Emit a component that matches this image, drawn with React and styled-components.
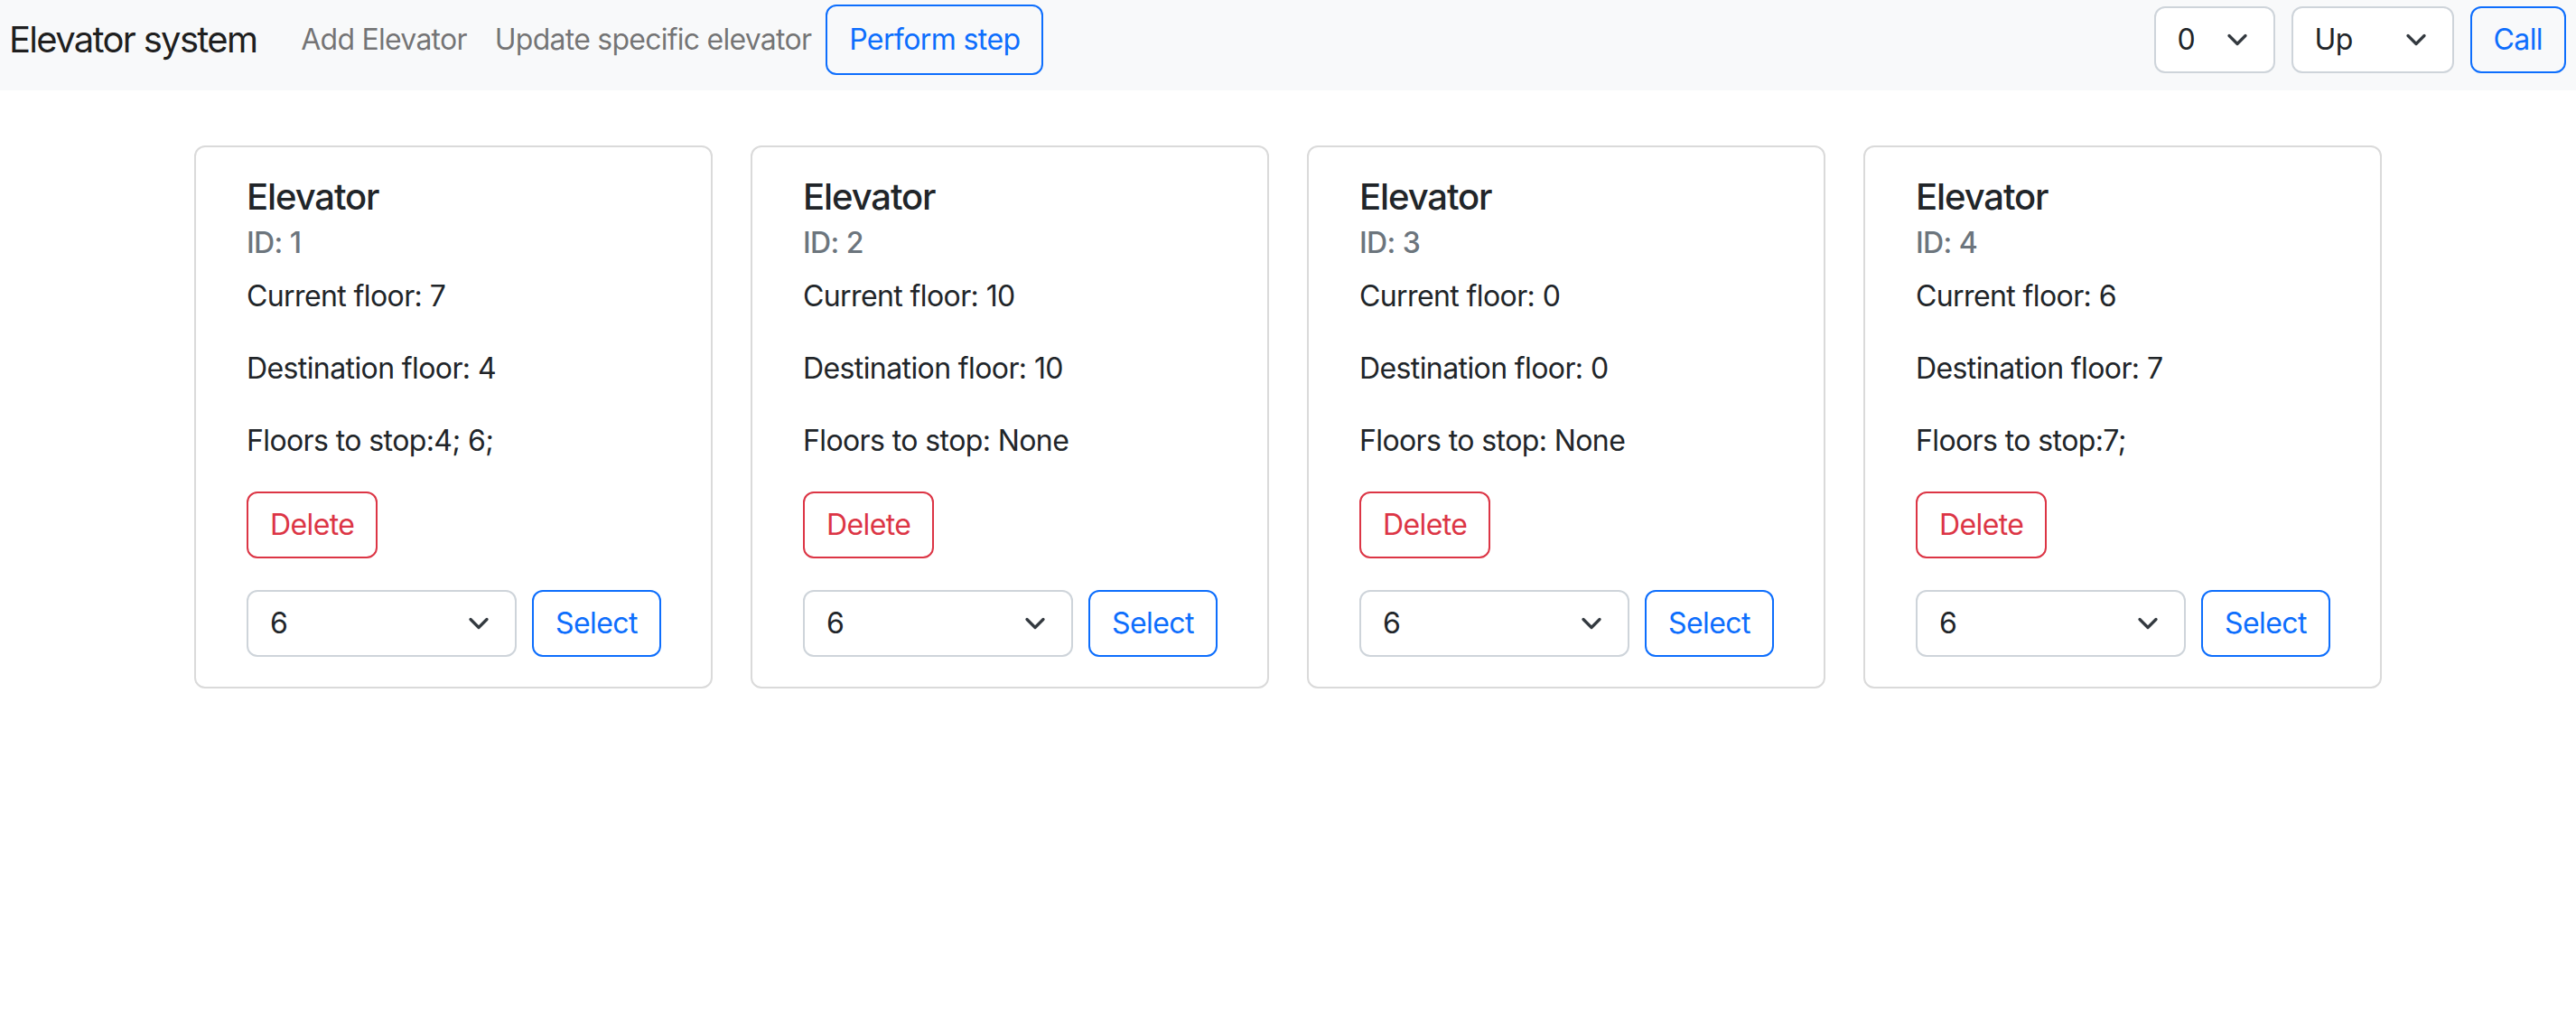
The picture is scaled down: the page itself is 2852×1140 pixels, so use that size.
import React, { useState } from "react";
import styled, { createGlobalStyle } from "styled-components";

const colors = {
  text: "#212529",
  muted: "#6c757d",
  navLink: "rgba(0, 0, 0, 0.55)",
  navBg: "#f8f9fa",
  primary: "#0d6efd",
  danger: "#dc3545",
  cardBorder: "#dadada",
  inputBorder: "#ced4da"
};

const GlobalStyle = createGlobalStyle`
  body {
    margin: 0;
    background: #fff;
    color: ${colors.text};
    font-family: Inter, "Noto Sans", "Liberation Sans", sans-serif;
    font-size: 32px;
    line-height: 1.5;
    letter-spacing: -0.6px;
    -webkit-font-smoothing: antialiased;
  }
`;

const elevatorsData = [
  { id: 1, current: 7, destination: 4, stops: [4, 6] },
  { id: 2, current: 10, destination: 10, stops: [] },
  { id: 3, current: 0, destination: 0, stops: [] },
  { id: 4, current: 6, destination: 7, stops: [7] }
];

const floors = [0, 1, 2, 3, 4, 5, 6, 7, 8, 9, 10];

const Chevron = () => (
  <svg width="24" height="24" viewBox="0 0 16 16" fill="none">
    <path
      d="m2 5 6 6 6-6"
      stroke="#343a40"
      strokeWidth="2.2"
      strokeLinecap="round"
      strokeLinejoin="round"
    />
  </svg>
);

const Dropdown = ({ value, options, width, onChange }) => (
  <SelectWrap width={width}>
    <NativeSelect value={value} onChange={e => onChange(e.target.value)}>
      {options.map(o => (
        <option key={o} value={o}>
          {o}
        </option>
      ))}
    </NativeSelect>
    <ChevronBox>
      <Chevron />
    </ChevronBox>
  </SelectWrap>
);

const ElevatorCard = ({ elevator }) => {
  const [floor, setFloor] = useState("6");
  const stopsText = elevator.stops.length
    ? elevator.stops.map(s => `${s};`).join(" ")
    : " None";
  return (
    <Card>
      <CardTitle>Elevator</CardTitle>
      <CardSubtitle>ID: {elevator.id}</CardSubtitle>
      <Info>Current floor: {elevator.current}</Info>
      <Info>Destination floor: {elevator.destination}</Info>
      <Info>Floors to stop:{stopsText}</Info>
      <Button variant="danger">Delete</Button>
      <SelectRow>
        <Dropdown value={floor} options={floors} width={299} onChange={setFloor} />
        <Button>Select</Button>
      </SelectRow>
    </Card>
  );
};

export default function App() {
  const [callFloor, setCallFloor] = useState("0");
  const [direction, setDirection] = useState("Up");
  return (
    <>
      <GlobalStyle />
      <Navbar>
        <NavLeft>
          <Brand>Elevator system</Brand>
          <NavLink>Add Elevator</NavLink>
          <NavLink>Update specific elevator</NavLink>
          <Button tall>Perform step</Button>
        </NavLeft>
        <NavRight>
          <Dropdown
            value={callFloor}
            options={floors}
            width={134}
            onChange={setCallFloor}
          />
          <Dropdown
            value={direction}
            options={["Up", "Down"]}
            width={180}
            onChange={setDirection}
          />
          <Button>Call</Button>
        </NavRight>
      </Navbar>
      <CardRow>
        {elevatorsData.map(e => (
          <ElevatorCard key={e.id} elevator={e} />
        ))}
      </CardRow>
    </>
  );
}

const Navbar = styled.nav`
  display: flex;
  align-items: center;
  justify-content: space-between;
  height: 100px;
  box-sizing: border-box;
  padding: 0 11px 12px 10px;
  background: ${colors.navBg};
`;

const NavLeft = styled.div`
  display: flex;
  align-items: center;
`;

const NavRight = styled.div`
  display: flex;
  align-items: center;
  gap: 18px;
`;

const Brand = styled.span`
  font-size: 40px;
  line-height: 60px;
  letter-spacing: -1.7px;
  color: rgba(0, 0, 0, 0.9);
  margin-right: 34px;
`;

const NavLink = styled.span`
  font-size: 32px;
  line-height: 48px;
  letter-spacing: -0.75px;
  padding: 0 16px 0 15px;
  color: ${colors.navLink};
`;

const Button = styled.button`
  font-family: inherit;
  font-size: 32px;
  line-height: 48px;
  letter-spacing: inherit;
  padding: ${p => (p.tall ? "13px 24px" : "11px 24px")};
  border: 2px solid ${p => (p.variant === "danger" ? colors.danger : colors.primary)};
  border-radius: 12px;
  background: transparent;
  color: ${p => (p.variant === "danger" ? colors.danger : colors.primary)};
  cursor: pointer;
`;

const SelectWrap = styled.div`
  position: relative;
  width: ${p => p.width}px;
  flex: none;
`;

const NativeSelect = styled.select`
  appearance: none;
  width: 100%;
  box-sizing: border-box;
  font-family: inherit;
  font-size: 32px;
  line-height: 48px;
  letter-spacing: inherit;
  height: 74px;
  padding: 11px 72px 11px 24px;
  border: 2px solid ${colors.inputBorder};
  border-radius: 12px;
  background: #fff;
  color: ${colors.text};
  outline: none;
`;

const ChevronBox = styled.span`
  position: absolute;
  right: 30px;
  top: 50%;
  transform: translateY(-50%);
  display: flex;
  pointer-events: none;
`;

const CardRow = styled.main`
  display: flex;
  justify-content: center;
  gap: 42px;
  margin-top: 61px;
`;

const Card = styled.div`
  width: 574px;
  box-sizing: border-box;
  padding: 31px 56px 33px;
  border: 2px solid ${colors.cardBorder};
  border-radius: 12px;
  background: #fff;
`;

const CardTitle = styled.h5`
  margin: 0 0 16px;
  font-size: 40px;
  line-height: 48px;
  font-weight: 500;
  letter-spacing: -1.1px;
`;

const CardSubtitle = styled.h6`
  margin: -8px 0 16px;
  font-size: 32px;
  line-height: 38px;
  font-weight: 500;
  color: ${colors.muted};
`;

const Info = styled.p`
  margin: 0 0 32px;
  font-size: 32px;
  line-height: 48px;
`;

const SelectRow = styled.div`
  display: flex;
  align-items: center;
  gap: 17px;
  margin-top: 35px;
`;
